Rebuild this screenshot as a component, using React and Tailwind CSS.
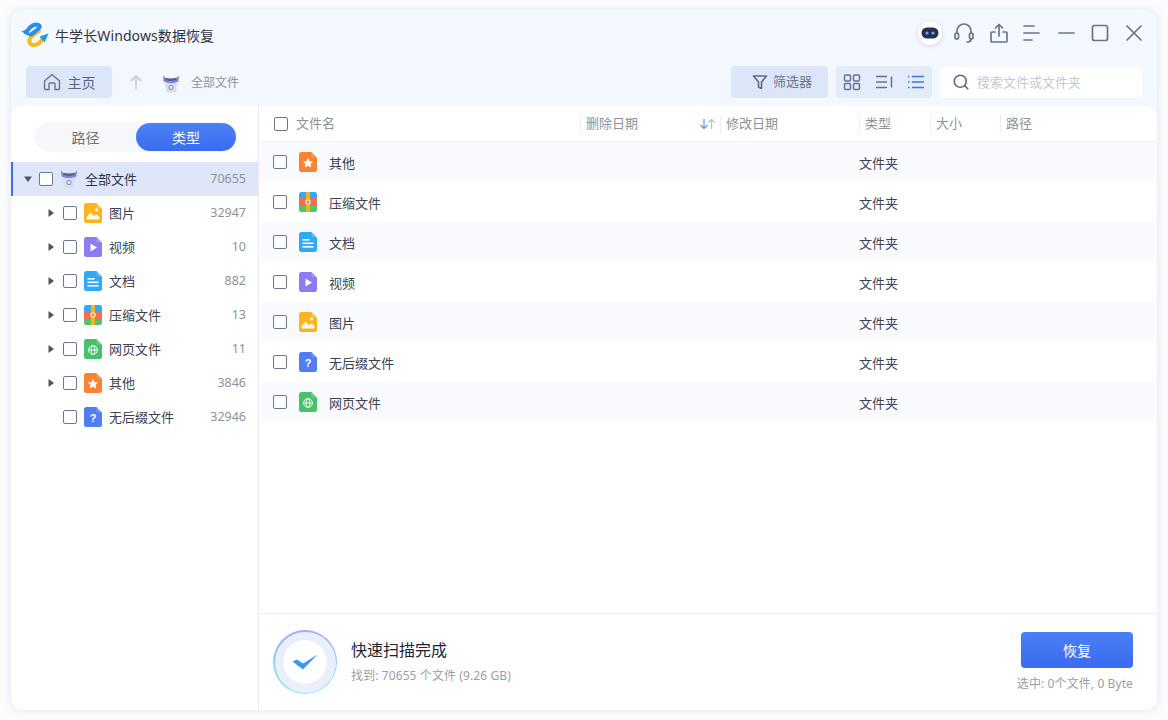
import { Search } from "lucide-react";

const fontStack = { fontFamily: '"Noto Sans", "Noto Sans CJK SC", sans-serif' };

function Logo() {
  return (
    <svg width="28" height="26" viewBox="0 0 28 26" fill="none">
      <path d="M18 9 L10 15 C6.500 19 9 23.500 13.500 23 C17 22.500 19.500 20.500 21.500 17" stroke="#fbb91f" strokeWidth="4" strokeLinecap="round" />
      <path d="M5 10.500 C8.500 5 13 1.500 17.500 3 C21 4.500 17 7.500 10 12.500" stroke="#2b8fe8" strokeWidth="4" strokeLinecap="round" />
      <path d="M0.500 9.500 L7.500 6.500 L8.500 14.500 Z" fill="#2b8fe8" />
      <path d="M27.500 11.500 L18.500 14.500 L23.500 20.500 Z" fill="#1d9be8" />
    </svg>
  );
}

function Bin() {
  return (
    <svg width="18" height="18" viewBox="0 0 18 18" fill="none" className="shrink-0">
      <path d="M2.500 5 L15.500 5 L14 16.500 Q13.800 17.500 12.500 17.500 L5.500 17.500 Q4.200 17.500 4 16.500 Z" fill="#d8deee" />
      <path d="M1 0.500 L3.200 2.800 Q9 4.200 14.800 2.800 L17 0.500 L16.500 6.500 Q9 10 1.500 6.500 Z" fill="#7f8acb" />
      <path d="M3.500 2.800 Q9 4.800 14.500 2.800 L14.500 5 Q9 7.200 3.500 5 Z" fill="#545fa6" />
      <circle cx="9" cy="12.500" r="2.200" stroke="#8790b8" strokeWidth="1" />
    </svg>
  );
}

function FileShape({ color, children }) {
  return (
    <svg width="18" height="20" viewBox="0 0 18 20" fill="none" className="shrink-0">
      <path d="M2.500 0 H12.500 L18 5.500 V17.500 Q18 20 15.500 20 H2.500 Q0 20 0 17.500 V2.500 Q0 0 2.500 0 Z" fill={color} />
      <path d="M12.500 0 L18 5.500 H14 Q12.500 5.500 12.500 4 Z" fill="#ffffff" fillOpacity="0.2" />
      {children}
    </svg>
  );
}

function TypeIcon({ type }) {
  if (type === "image") {
    return (
      <FileShape color="#fdb41c">
        <circle cx="12.500" cy="7" r="1.600" fill="#fff" />
        <path d="M2.500 16.500 V14 L6.500 9.500 L10 13 L12.500 11.500 L15.500 14 V16.500 Z" fill="#fff" fillOpacity="0.9" />
      </FileShape>
    );
  }
  if (type === "video") {
    return (
      <FileShape color="#8c7cf0">
        <path d="M6.500 6.500 L13 10.500 L6.500 14.500 Z" fill="#fff" />
      </FileShape>
    );
  }
  if (type === "doc") {
    return (
      <FileShape color="#2fa9f8">
        <rect x="3.500" y="7" width="7" height="1.600" fill="#fff" />
        <rect x="3.500" y="10.500" width="11" height="1.600" fill="#fff" />
        <rect x="3.500" y="14" width="11" height="1.600" fill="#fff" />
      </FileShape>
    );
  }
  if (type === "zip") {
    return (
      <svg width="18" height="20" viewBox="0 0 18 20" className="shrink-0">
        <path d="M2.500 0 H15.500 Q18 0 18 2.500 V6 H0 V2.500 Q0 0 2.500 0 Z" fill="#2fa9f8" />
        <rect y="6" width="18" height="8" fill="#ef6f53" />
        <path d="M0 14 H18 V17.500 Q18 20 15.500 20 H2.500 Q0 20 0 17.500 Z" fill="#4fc565" />
        <rect x="7" width="4" height="20" fill="#f4b321" />
        <circle cx="9" cy="10" r="2.800" fill="#fbe3a8" />
        <circle cx="9" cy="10" r="1.200" fill="#ef6f53" />
      </svg>
    );
  }
  if (type === "web") {
    return (
      <FileShape color="#46c26b">
        <circle cx="9" cy="11" r="4.400" stroke="#fff" strokeWidth="1" />
        <ellipse cx="9" cy="11" rx="1.900" ry="4.400" stroke="#fff" strokeWidth="0.9" />
        <path d="M4.600 11 H13.400" stroke="#fff" strokeWidth="0.9" />
      </FileShape>
    );
  }
  if (type === "other") {
    return (
      <FileShape color="#fb8232">
        <path d="M9 6.500 L10.400 9.400 L13.500 9.800 L11.200 12 L11.800 15 L9 13.600 L6.200 15 L6.800 12 L4.500 9.800 L7.600 9.400 Z" fill="#fff" stroke="#fff" strokeWidth="0.6" strokeLinejoin="round" />
      </FileShape>
    );
  }
  return (
    <FileShape color="#4f7df2">
      <text x="9" y="15" textAnchor="middle" fontSize="11" fontWeight="700" fill="#fff" fontFamily="Liberation Sans, sans-serif">?</text>
    </FileShape>
  );
}

function Checkbox() {
  return <span className="block h-[14px] w-[14px] shrink-0 rounded-[2px] border border-[#6b7690] bg-white"></span>;
}

function Caret({ open }) {
  return (
    <svg width="8" height="8" viewBox="0 0 8 8" className="shrink-0">
      {open ? <path d="M0 1.500 H8 L4 7 Z" fill="#4b5568" /> : <path d="M1.500 0 L7 4 L1.500 8 Z" fill="#4b5568" />}
    </svg>
  );
}

function WinIcon({ children }) {
  return (
    <svg width="24" height="24" viewBox="0 0 24 24" fill="none" stroke="#68748e" strokeWidth="1.700" strokeLinecap="round" strokeLinejoin="round">
      {children}
    </svg>
  );
}

const treeRows = [
  { name: "图片", type: "image", count: "32947", caret: true },
  { name: "视频", type: "video", count: "10", caret: true },
  { name: "文档", type: "doc", count: "882", caret: true },
  { name: "压缩文件", type: "zip", count: "13", caret: true },
  { name: "网页文件", type: "web", count: "11", caret: true },
  { name: "其他", type: "other", count: "3846", caret: true },
  { name: "无后缀文件", type: "unknown", count: "32946", caret: false },
];

const fileRows = [
  { name: "其他", type: "other" },
  { name: "压缩文件", type: "zip" },
  { name: "文档", type: "doc" },
  { name: "视频", type: "video" },
  { name: "图片", type: "image" },
  { name: "无后缀文件", type: "unknown" },
  { name: "网页文件", type: "web" },
];

function HeaderCell({ label, className, children }) {
  return (
    <div className={`flex h-[18px] items-center border-l border-[#eceef3] pl-[5px] text-[13px] text-[#8d929c] ${className}`}>
      <span>{label}</span>
      {children}
    </div>
  );
}

export default function App() {
  return (
    <div className="h-[720px] w-[1168px] overflow-hidden bg-[#fbfcfe] px-[11px] py-[10px]" style={fontStack}>
      <div className="flex h-[700px] flex-col overflow-hidden rounded-xl bg-gradient-to-b from-[#f4f8ff] to-[#edf3fd] shadow-[0_0_8px_rgba(90,110,160,0.18)]">
        {/* title bar */}
        <div className="flex h-[48px] items-center justify-between pr-[11px] pl-[10px]">
          <div className="mt-[2px] flex items-center gap-[6px]">
            <Logo />
            <span className="text-[14px] tracking-[0.1px] text-[#2e3442]">牛学长Windows数据恢复</span>
          </div>
          <div className="mb-[2px] flex items-center">
            <div className="mr-[10px] flex h-[24px] w-[24px] items-center justify-center rounded-full bg-white shadow-[0_1px_4px_rgba(90,110,160,0.25)]">
              <svg width="18" height="12" viewBox="0 0 18 12">
                <rect x="0.500" y="0.500" width="17" height="11" rx="5.500" fill="#23304f" />
                <circle cx="6" cy="6" r="1.600" fill="#6ea2f5" />
                <circle cx="12" cy="6" r="1.600" fill="#6ea2f5" />
              </svg>
            </div>
            <div className="mr-[11px]">
              <WinIcon>
                <path d="M5 12 V10 a7 7 0 0 1 14 0 V12" />
                <rect x="3" y="12" width="3.500" height="6" rx="1.700" />
                <rect x="17.500" y="12" width="3.500" height="6" rx="1.700" />
                <path d="M19 18 q0 3 -4 3" />
              </WinIcon>
            </div>
            <div className="mr-[8px]">
              <WinIcon>
                <path d="M8 11 H5 Q4 11 4 12 V20 Q4 21 5 21 H19 Q20 21 20 20 V12 Q20 11 19 11 H16" />
                <path d="M12 15 V3.500 M8.500 7 L12 3.500 L15.500 7" />
              </WinIcon>
            </div>
            <div className="mr-[12px]">
              <WinIcon>
                <path d="M5 5 H15 M5 12 H20 M5 19 H13" />
              </WinIcon>
            </div>
            <div className="mr-[9px]">
              <WinIcon>
                <path d="M4 12 H19" />
              </WinIcon>
            </div>
            <div className="mr-[10px]">
              <WinIcon>
                <rect x="4.500" y="4.500" width="15" height="15" rx="2" />
              </WinIcon>
            </div>
            <WinIcon>
              <path d="M5 5 L19 19 M19 5 L5 19" />
            </WinIcon>
          </div>
        </div>

        {/* toolbar */}
        <div className="mt-[8px] flex h-[32px] items-center justify-between px-[15px]">
          <div className="flex items-center">
            <div className="flex h-[32px] w-[86px] items-center justify-center gap-[7px] rounded-[4px] bg-[#dde6f8] text-[14px] text-[#5b6478]">
              <svg width="18" height="18" viewBox="0 0 18 18" fill="none" stroke="#68748e" strokeWidth="1.400" strokeLinejoin="round">
                <path d="M1.500 8 L9 1.500 L16.500 8 V15.500 Q16.500 16.500 15.500 16.500 H12 V11 Q12 10 11 10 H7 Q6 10 6 11 V16.500 H2.500 Q1.500 16.500 1.500 15.500 Z" />
              </svg>
              <span>主页</span>
            </div>
            <svg className="ml-[17px]" width="14" height="16" viewBox="0 0 14 16" fill="none" stroke="#c9d0dd" strokeWidth="1.800">
              <path d="M7 15 V2 M2 7 L7 2 L12 7" />
            </svg>
            <div className="mt-[3px] ml-[19px]">
              <Bin />
            </div>
            <span className="mt-[1px] ml-[11px] text-[12px] text-[#8d929c]">全部文件</span>
          </div>
          <div className="flex items-center">
            <div className="flex h-[32px] w-[97px] items-center gap-[5px] rounded-[4px] bg-[#dde6f8] pl-[21px] text-[13px] text-[#68748e]">
              <svg width="16" height="16" viewBox="0 0 16 16" fill="none" stroke="#5f6b86" strokeWidth="1.600" strokeLinejoin="round">
                <path d="M1.500 2 H14.500 L9.500 8 V14.500 L6.500 13 V8 Z" />
              </svg>
              <span>筛选器</span>
            </div>
            <div className="ml-[8px] flex h-[32px] w-[96px] items-center justify-between rounded-[4px] bg-[#e4ebf9] px-[7px]">
              <svg width="18" height="18" viewBox="0 0 18 18" fill="none" stroke="#68748e" strokeWidth="1.500">
                <rect x="1.500" y="2" width="6" height="6" rx="1.200" />
                <rect x="10.500" y="2" width="6" height="6" rx="1.200" />
                <rect x="1.500" y="10.500" width="6" height="6" rx="1.200" />
                <rect x="10.500" y="10.500" width="6" height="6" rx="1.200" />
              </svg>
              <svg width="20" height="18" viewBox="0 0 20 18" fill="none" stroke="#68748e" strokeWidth="1.500">
                <path d="M2 3.500 H13 M2 9 H13 M2 14.500 H13 M17.500 3.500 V14.500" />
              </svg>
              <svg width="18" height="18" viewBox="0 0 18 18" fill="none" stroke="#3f74f0" strokeWidth="1.600">
                <path d="M5 3.500 H17 M5 9 H17 M5 14.500 H17 M1 3.500 H2.500 M1 9 H2.500 M1 14.500 H2.500" />
              </svg>
            </div>
            <div className="ml-[8px] flex h-[31px] w-[202px] items-center rounded-[3px] bg-white pl-[12px]">
              <Search size={18} strokeWidth={2.2} color="#5f6b86" />
              <span className="mt-[1px] ml-[7px] text-[13px] text-[#c6c9cf]">搜索文件或文件夹</span>
            </div>
          </div>
        </div>

        {/* main */}
        <div className="mt-[8px] flex min-h-0 flex-1 overflow-hidden rounded-t-xl bg-white">
          {/* sidebar */}
          <div className="w-[248px] shrink-0 border-r border-[#e9ebf0]">
            <div className="pt-[16px] pl-[24px]">
              <div className="flex h-[30px] w-[201px] items-center rounded-full bg-[#f5f7fb] text-[14px]">
                <div className="flex-1 text-center text-[#6b7280]">路径</div>
                <div className="flex h-[28px] w-[100px] items-center justify-center rounded-full bg-gradient-to-b from-[#4c82f7] to-[#3a6cf0] text-white">类型</div>
              </div>
            </div>
            <div className="mt-[10px] flex h-[34px] items-center border-l-2 border-[#3f6ee6] bg-[#dfe6fa] pr-[12px] pl-[11px]">
              <Caret open />
              <span className="ml-[7px]"><Checkbox /></span>
              <span className="ml-[7px]"><Bin /></span>
              <span className="ml-[7px] flex-1 pt-[1px] text-[13px] text-[#2e3442]">全部文件</span>
              <span className="text-[12.5px] text-[#8d929c]">70655</span>
            </div>
            {treeRows.map((row) => (
              <div key={row.name} className="flex h-[34px] items-center pr-[12px] pl-[36px]">
                <span className="w-[8px] shrink-0">{row.caret && <Caret />}</span>
                <span className="ml-[8px]"><Checkbox /></span>
                <span className="ml-[7px]"><TypeIcon type={row.type} /></span>
                <span className="ml-[7px] flex-1 pt-[1px] text-[13px] text-[#3c4250]">{row.name}</span>
                <span className="text-[12.5px] text-[#8d929c]">{row.count}</span>
              </div>
            ))}
          </div>

          {/* file list */}
          <div className="flex min-w-0 flex-1 flex-col">
            <div className="flex h-[36px] items-center border-b border-[#f0f2f6] pl-[15px]">
              <Checkbox />
              <div className="w-[292px] pl-[8px] text-[13px] text-[#8d929c]">文件名</div>
              <HeaderCell label="删除日期" className="relative w-[140px]">
                <svg className="absolute right-[4px]" width="17" height="12" viewBox="0 0 17 12" fill="none" strokeWidth="1.300">
                  <path d="M5 1 V10.500 M1.500 7 L5 10.500 L8.500 7" stroke="#6f95e8" />
                  <path d="M12.500 11 V1.500 M9.500 4.500 L12.500 1.500 L15.500 4.500" stroke="#b9c3d8" />
                </svg>
              </HeaderCell>
              <HeaderCell label="修改日期" className="w-[139px]" />
              <HeaderCell label="类型" className="w-[71px]" />
              <HeaderCell label="大小" className="w-[70px]" />
              <HeaderCell label="路径" className="flex-1" />
            </div>
            <div className="min-h-0 flex-1">
              {fileRows.map((row, i) => (
                <div key={row.name} className={`flex h-[40px] items-center pl-[14px] ${i % 2 === 0 ? "bg-[#f9fafe]" : "bg-white"}`}>
                  <Checkbox />
                  <span className="ml-[12px]"><TypeIcon type={row.type} /></span>
                  <span className="ml-[12px] w-[530px] pt-[3px] text-[13px] text-[#3c4250]">{row.name}</span>
                  <span className="pt-[3px] text-[13px] text-[#3c4250]">文件夹</span>
                </div>
              ))}
            </div>

            {/* footer */}
            <div className="flex h-[97px] shrink-0 items-center justify-between border-t border-[#eceef3] pr-[24px] pl-[14px]">
              <div className="flex items-center">
                <div className="flex h-[64px] w-[64px] items-center justify-center rounded-full bg-gradient-to-b from-[#9db4ee] to-[#8fe6f4] p-[1.5px]">
                  <div className="flex h-full w-full items-center justify-center rounded-full bg-[#e9effc]">
                    <div className="flex h-[46px] w-[46px] items-center justify-center rounded-full border border-[#e8ecf8] bg-white">
                      <svg width="26" height="16" viewBox="0 0 26 16">
                        <path d="M0.500 7.500 L5 5.500 L11 9.500 L25.500 0.500 L11 15.500 Z" fill="#3d97ef" />
                      </svg>
                    </div>
                  </div>
                </div>
                <div className="ml-[14px] mt-[-1px]">
                  <div className="text-[16px] leading-[22px] text-[#1f2430]">快速扫描完成</div>
                  <div className="mt-[6px] text-[12px] leading-[18px] tracking-[0.1px] text-[#9a9ea7]">找到: 70655 个文件 (9.26 GB)</div>
                </div>
              </div>
              <div className="flex flex-col items-end">
                <div className="mt-[1px] flex h-[36px] w-[112px] items-center justify-center rounded-[4px] bg-gradient-to-b from-[#4a80f7] to-[#3a6bf0] text-[14px] text-white">恢复</div>
                <div className="mt-[7px] text-[12px] leading-[18px] tracking-[0.1px] text-[#9a9ea7]">选中: 0个文件, 0 Byte</div>
              </div>
            </div>
          </div>
        </div>
      </div>
    </div>
  );
}
